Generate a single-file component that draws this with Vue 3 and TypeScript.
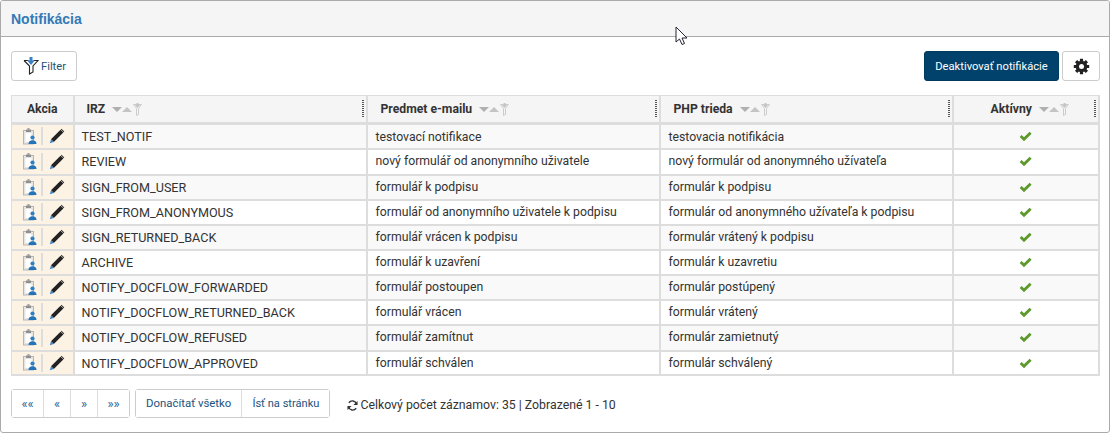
<template>
  <div class="panel">
    <div class="panel-heading">Notifikácia</div>
    <div class="panel-body">
      <div class="toolbar">
        <button class="btn filter-btn">
          <svg width="16" height="18" viewBox="0 0 16 18">
            <path d="M1 3.500h4.500M10.500 3.500H15L10 9v6l-3.500 2V9L1 3.500" fill="#fff" stroke="#222" stroke-width="1.100" />
            <path d="M6.500 0h3v3.500h2.300L8 8 4.200 3.500h2.300z" fill="#3b82c4" />
          </svg>
          Filter
        </button>
        <div class="toolbar-right">
          <button class="btn btn-primary">Deaktivovať notifikácie</button>
          <button class="btn gear-btn">
            <svg width="17" height="17" viewBox="0 0 17 17">
              <g stroke="#222" stroke-width="3.200">
                <path d="M8.500 .8v15.400M.8 8.500h15.400M3.100 3.100l10.800 10.800M13.900 3.100L3.100 13.900" />
              </g>
              <circle cx="8.500" cy="8.500" r="5.800" fill="#222" />
              <circle cx="8.500" cy="8.500" r="2.500" fill="#fff" />
            </svg>
          </button>
        </div>
      </div>

      <table class="grid">
        <colgroup>
          <col style="width: 62px" />
          <col style="width: 293px" />
          <col style="width: 293px" />
          <col style="width: 293px" />
          <col />
        </colgroup>
        <thead>
          <tr>
            <th class="center">Akcia</th>
            <th v-for="col in columns" :key="col.label" :class="{ sortable: col.center }">
              <span class="th-label">{{ col.label }}</span>
              <span class="sorters">
                <i class="arrow down"></i><i class="arrow up"></i>
                <svg width="9" height="13" viewBox="0 0 9 13">
                  <path d="M0.500 1.500h8L5.500 5.500v6l-2 1v-7z" fill="none" stroke="#ccc" stroke-width="1" />
                  <path d="M3.500 0h2v2h1.500L4.500 5 2 2h1.500z" fill="#c4c4c4" />
                </svg>
              </span>
              <span class="grip"></span>
            </th>
          </tr>
        </thead>
        <tbody>
          <tr v-for="row in rows" :key="row[0]">
            <td class="actions">
              <div class="action-wrap">
                <span class="action">
                  <svg width="14" height="17" viewBox="0 0 14 17">
                    <rect x="0.500" y="2.500" width="10" height="13.500" fill="#eceae6" stroke="#b5b5b5" />
                    <rect x="2" y="4.500" width="7" height="10" fill="#fff" stroke="#d8d8d8" stroke-width=".6" />
                    <rect x="3" y="1.500" width="5" height="2.500" fill="#8f8f8f" />
                    <rect x="4.500" y="0" width="2" height="2" fill="#a0a0a0" />
                    <circle cx="9.500" cy="9.500" r="2.100" fill="#2f7fc4" />
                    <path d="M5.500 16c0-2.600 1.500-3.800 4-3.800s4 1.200 4 3.800z" fill="#2273b8" />
                  </svg>
                </span>
                <span class="action">
                  <svg width="16" height="16" viewBox="0 0 16 16">
                    <path d="M11.500 1.800l2.800 2.800L4.800 14 2 11.200z" fill="#222" />
                    <path d="M12.500 .8l2.800 2.800-.7.700-2.800-2.800z" fill="#333" />
                    <path d="M2 11.200L4.800 14 .8 15.300z" fill="#3f86c6" />
                  </svg>
                </span>
              </div>
            </td>
            <td>{{ row[0] }}</td>
            <td>{{ row[1] }}</td>
            <td>{{ row[2] }}</td>
            <td class="center">
              <svg class="check" width="13" height="11" viewBox="0 0 13 11">
                <path d="M.7 6l1.900-1.900L5 6.300 10.600.8 12.600 2.800 5 10.300z" fill="#5c9a2b" />
              </svg>
            </td>
          </tr>
        </tbody>
      </table>

      <div class="pager">
        <div class="btn-group">
          <button class="pg pg-nav first">««</button>
          <button class="pg pg-nav">«</button>
          <button class="pg pg-nav">»</button>
          <button class="pg pg-nav last">»»</button>
        </div>
        <div class="btn-group">
          <button class="pg pg-text">Donačítať všetko</button>
          <button class="pg pg-text goto">Ísť na stránku</button>
        </div>
        <div class="summary">
          <svg width="11" height="11" viewBox="0 0 12 12">
            <path d="M10.500 4.500A4.800 4.800 0 0 0 2 3M1.500 7.500A4.800 4.800 0 0 0 10 9" fill="none" stroke="#333" stroke-width="1.500" />
            <path d="M11.500 1v4.500H7zM.5 11V6.500H5z" fill="#333" />
          </svg>
          Celkový počet záznamov: 35 | Zobrazené 1 - 10
        </div>
      </div>
    </div>

    <svg class="cursor" width="14" height="20" viewBox="0 0 14 20">
      <path d="M1 1v15l3.500-3 2.500 5.500 2.500-1-2.500-5.500H12z" fill="#fff" stroke="#223" stroke-width="1" />
    </svg>
  </div>
</template>

<script setup lang="ts">
const columns = [
  { label: 'IRZ', center: false },
  { label: 'Predmet e-mailu', center: false },
  { label: 'PHP trieda', center: false },
  { label: 'Aktívny', center: true }
];

const rows: string[][] = [
  ['TEST_NOTIF', 'testovací notifikace', 'testovacia notifikácia'],
  ['REVIEW', 'nový formulář od anonymního uživatele', 'nový formulár od anonymného užívateľa'],
  ['SIGN_FROM_USER', 'formulář k podpisu', 'formulár k podpisu'],
  ['SIGN_FROM_ANONYMOUS', 'formulář od anonymního uživatele k podpisu', 'formulár od anonymného užívateľa k podpisu'],
  ['SIGN_RETURNED_BACK', 'formulář vrácen k podpisu', 'formulár vrátený k podpisu'],
  ['ARCHIVE', 'formulář k uzavření', 'formulár k uzavretiu'],
  ['NOTIFY_DOCFLOW_FORWARDED', 'formulář postoupen', 'formulár postúpený'],
  ['NOTIFY_DOCFLOW_RETURNED_BACK', 'formulář vrácen', 'formulár vrátený'],
  ['NOTIFY_DOCFLOW_REFUSED', 'formulář zamítnut', 'formulár zamietnutý'],
  ['NOTIFY_DOCFLOW_APPROVED', 'formulář schválen', 'formulár schválený']
];
</script>

<style>
html,
body {
  margin: 0;
  background: #fff;
}
</style>

<style scoped>
.panel {
  position: relative;
  box-sizing: border-box;
  width: 1110px;
  height: 433px;
  border: 1px solid #aaa;
  border-radius: 3px;
  font-family: 'Roboto', 'Liberation Sans', sans-serif;
  font-size: 12.250px;
  color: #333;
  overflow: hidden;
}

.panel-heading {
  box-sizing: border-box;
  height: 36px;
  padding: 10px 10px 0;
  background: #f5f5f5;
  border-bottom: 1px solid #aaa;
  font-family: 'Liberation Sans', sans-serif;
  font-size: 14px;
  font-weight: bold;
  color: #337ab7;
}

.panel-body {
  padding: 14px 9px 0 10px;
}

.toolbar {
  display: flex;
  justify-content: space-between;
  align-items: center;
  height: 30px;
  margin-bottom: 14px;
}

.toolbar-right {
  display: flex;
  gap: 3px;
}

.btn {
  box-sizing: border-box;
  height: 30px;
  border: 1px solid #ccc;
  border-radius: 3px;
  background: #fff;
  font-family: inherit;
  font-size: 11.200px;
  padding: 0;
}

.filter-btn {
  display: flex;
  align-items: center;
  gap: 2px;
  width: 66px;
  padding-left: 11px;
  color: #23527c;
}

.btn-primary {
  width: 135px;
  background: #00426b;
  border-color: #003a5e;
  color: #fff;
}

.gear-btn {
  display: flex;
  align-items: center;
  justify-content: center;
  width: 38px;
}

.grid {
  width: 1089px;
  border-collapse: collapse;
  table-layout: fixed;
  border: 1px solid #ddd;
}

.grid th {
  position: relative;
  box-sizing: border-box;
  height: 28px;
  padding: 0 0 0 13px;
  background: #f5f5f5;
  border-right: 2px solid #ddd;
  border-bottom: 3px solid #ddd;
  text-align: left;
  font-weight: bold;
  font-size: 12.200px;
}

.grid th.center {
  text-align: center;
  padding: 0;
}

.grid th:nth-child(2) {
  padding-left: 12px;
}

.grid th.sortable {
  text-align: center;
  padding: 0 0 0 8px;
}

.sorters {
  display: inline-flex;
  align-items: center;
  margin-left: 7px;
  vertical-align: middle;
}

.arrow {
  display: inline-block;
  width: 0;
  height: 0;
  border-left: 5px solid transparent;
  border-right: 5px solid transparent;
}

.arrow.down {
  border-top: 5px solid #b0b0b0;
}

.arrow.up {
  border-bottom: 5px solid #c4c4c4;
}

.sorters svg {
  margin-left: 1px;
}

.grip {
  position: absolute;
  top: 4px;
  right: 2px;
  width: 2px;
  height: 17px;
  background: repeating-linear-gradient(#555 0 1px, transparent 1px 2px);
}

.grid td {
  box-sizing: border-box;
  height: 25px;
  padding: 0 0 0 8px;
  border-right: 2px solid #ddd;
  border-bottom: 2px solid #ddd;
  white-space: nowrap;
  color: #333;
}

.grid td:nth-child(2) {
  padding-left: 7px;
  font-size: 12.600px;
}

.grid tbody tr:nth-child(odd) td {
  background: #f9f9f9;
}

.grid tbody tr:nth-child(2) td,
.grid tbody tr:nth-child(9) td {
  height: 26px;
  padding-bottom: 1px;
}

.grid tbody tr:first-child td {
  padding-top: 1px;
}

.grid tbody tr:last-child td {
  height: 24px;
  padding-top: 1px;
}

.grid td.center {
  text-align: center;
  padding: 0;
}

.grid tbody tr td.actions {
  padding: 0;
  background: #fcf3e5;
}

.action-wrap {
  display: flex;
  align-items: center;
  height: 22px;
}

.action {
  display: flex;
  align-items: center;
  justify-content: center;
  box-sizing: border-box;
  height: 18px;
  width: 28px;
}

.action:first-child {
  width: 31px;
  justify-content: flex-end;
  padding-right: 4px;
  border-right: 2px solid #ddd;
}

.check {
  display: block;
  margin: 0 auto;
}

.pager {
  display: flex;
  align-items: center;
  gap: 5px;
  margin-top: 13px;
}

.btn-group {
  display: flex;
  box-sizing: border-box;
  height: 29px;
  border: 1px solid #ccc;
  border-radius: 3px;
}

.pg {
  box-sizing: border-box;
  height: 27px;
  border: 0;
  border-right: 1px solid #ddd;
  background: #fff;
  color: #23527c;
  font-family: inherit;
  font-size: 11.400px;
  padding: 0;
}

.pg:last-child {
  border-right: 0;
}

.pg-nav {
  width: 27px;
  font-size: 13px;
  color: #2a6496;
}

.pg-nav.first {
  width: 32px;
}

.pg-nav.last {
  width: 31px;
}

.pg-text {
  padding: 0 10px;
}

.pg-text.goto {
  font-size: 11.100px;
}

.summary {
  display: flex;
  align-items: center;
  gap: 2px;
  margin-left: 12px;
  padding-top: 4px;
  font-size: 12.300px;
  color: #333;
}

.cursor {
  position: absolute;
  top: 25px;
  left: 674px;
}
</style>
